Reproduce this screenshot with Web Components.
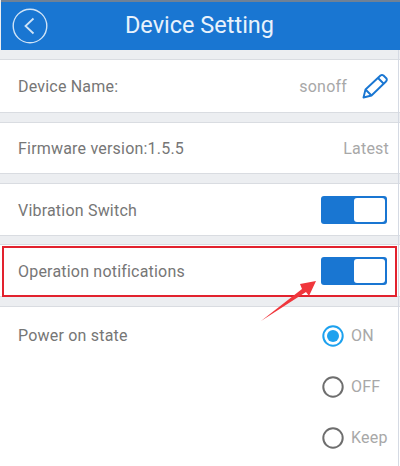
<!DOCTYPE html>
<html>
<head>
<meta charset="utf-8">
<style>
  html, body { margin: 0; padding: 0; background: #fff; }
  body { font-family: Roboto, "Liberation Sans", sans-serif; width: 400px; height: 466px; overflow: hidden; }
</style>
</head>
<body>
<setting-page>
  <app-header title="Device Setting"></app-header>
  <setting-row style="--h:54px;--gap:9px">
    Device Name:
    <span slot="end" class="val">sonoff</span>
    <edit-icon slot="end"></edit-icon>
  </setting-row>
  <setting-row style="--h:52px;--gap:9px">
    Firmware version:1.5.5
    <span slot="end" class="val" style="margin-right:-2px">Latest</span>
  </setting-row>
  <setting-row style="--h:53px;--gap:9px">
    Vibration Switch
    <toggle-switch slot="end"></toggle-switch>
  </setting-row>
  <setting-row style="--h:53px;--gap:8px">
    Operation notifications
    <toggle-switch slot="end"></toggle-switch>
  </setting-row>
  <power-row style="--gap:9px"></power-row>
  <call-out></call-out>
</setting-page>
<script>
  class SettingPage extends HTMLElement {
    constructor() {
      super();
      this.attachShadow({ mode: "open" });
      this.shadowRoot.innerHTML = `
        <style>
          :host { display: flex; flex-direction: column; position: relative; width: 400px; height: 466px; background: #eceef1; overflow: hidden; }
          .edge { position: absolute; top: 50px; right: 1px; bottom: 0; width: 1px; background: #d5dae3; }
        </style>
        <slot></slot>
        <div class="edge"></div>
      `;
    }
  }
  customElements.define("setting-page", SettingPage);

  class AppHeader extends HTMLElement {
    constructor() {
      super();
      this.attachShadow({ mode: "open" });
      this.shadowRoot.innerHTML = `
        <style>
          :host { display: flex; align-items: center; height: 48px; background: #1976d2; border-top: 2px solid #6f8196; margin-left: 1px; position: relative; }
          svg { margin-left: 11px; display: block; }
          .title { position: absolute; left: -2px; right: 0; text-align: center; color: #e8f2fc; font-size: 23.5px; line-height: 46px; top: 0; }
        </style>
        <svg width="36" height="36" viewBox="0 0 36 36" fill="none" stroke="#cfe3f6">
          <circle cx="18" cy="18" r="16.8" stroke-width="1.4"/>
          <path d="M21.5 10.5 L13.5 18 L21.5 25.5" stroke-width="1.8"/>
        </svg>
        <div class="title">${this.getAttribute("title")}</div>
      `;
    }
  }
  customElements.define("app-header", AppHeader);

  class SettingRow extends HTMLElement {
    constructor() {
      super();
      this.attachShadow({ mode: "open" });
      this.shadowRoot.innerHTML = `
        <style>
          :host { display: flex; align-items: center; justify-content: space-between; box-sizing: border-box;
            height: var(--h); margin-top: var(--gap); padding: 0 13px 0 18px; background: #fff;
            border-top: 1px solid #d9dce1; border-bottom: 1px solid #d9dce1;
            color: #767676; font-size: 16px; letter-spacing: .2px; }
          .label { padding-top: 1px; }
          .end { display: flex; align-items: center; }
          ::slotted(.val) { color: #a8a8a8; }
        </style>
        <div class="label"><slot></slot></div>
        <div class="end"><slot name="end"></slot></div>
      `;
    }
  }
  customElements.define("setting-row", SettingRow);

  class EditIcon extends HTMLElement {
    constructor() {
      super();
      this.attachShadow({ mode: "open" });
      this.shadowRoot.innerHTML = `
        <style>
          :host { display: block; margin-left: 15px; margin-right: -1px; height: 26px; }
          svg { display: block; }
        </style>
        <svg width="26" height="26" viewBox="0 0 26 26" fill="none" stroke="#1976d2" stroke-width="1.9" stroke-linejoin="round">
          <path d="M1.5 24.5 L3.5 16.5 L18.5 2.5 Q20 1.5 21.5 2.5 L24.5 5.5 Q25.3 7 24 8.5 L9.5 22.5 Z"/>
          <path d="M3.5 16.5 L9.5 22.5 M16 5 L22 11"/>
        </svg>
      `;
    }
  }
  customElements.define("edit-icon", EditIcon);

  class ToggleSwitch extends HTMLElement {
    constructor() {
      super();
      this.attachShadow({ mode: "open" });
      this.shadowRoot.innerHTML = `
        <style>
          :host { display: flex; justify-content: flex-end; box-sizing: border-box; width: 66px; height: 28px; padding: 2px; background: #1976d2; border-radius: 3px; }
          .knob { width: 31px; background: #fff; border-radius: 3px; }
        </style>
        <div class="knob"></div>
      `;
    }
  }
  customElements.define("toggle-switch", ToggleSwitch);

  class RadioOption extends HTMLElement {
    constructor() {
      super();
      this.attachShadow({ mode: "open" });
      const on = this.hasAttribute("checked");
      this.shadowRoot.innerHTML = `
        <style>
          :host { display: flex; align-items: center; gap: 7px; height: 51px; color: #a8a8a8; font-size: 16px; }
          svg { display: block; }
        </style>
        <svg width="22" height="22" viewBox="0 0 22 22" fill="none">
          <circle cx="11" cy="11" r="9.7" stroke="${on ? "#1da1ee" : "#6e6e6e"}" stroke-width="2"/>
          ${on ? '<circle cx="11" cy="11" r="6" fill="#1da1ee"/>' : ""}
        </svg>
        <slot></slot>
      `;
    }
  }
  customElements.define("radio-option", RadioOption);

  class PowerRow extends HTMLElement {
    constructor() {
      super();
      this.attachShadow({ mode: "open" });
      this.shadowRoot.innerHTML = `
        <style>
          :host { display: flex; justify-content: space-between; flex: 1; margin-top: var(--gap); padding: 0 0 0 18px; background: #fff; border-top: 1px solid #d9dce1; color: #767676; font-size: 16px; letter-spacing: .2px; }
          .label { margin-top: 19px; }
          .opts { display: flex; flex-direction: column; width: 78px; margin-top: 3px; }
        </style>
        <div class="label">Power on state</div>
        <div class="opts">
          <radio-option checked>ON</radio-option>
          <radio-option>OFF</radio-option>
          <radio-option>Keep</radio-option>
        </div>
      `;
    }
  }
  customElements.define("power-row", PowerRow);

  // red annotation drawn over the screenshot
  class CallOut extends HTMLElement {
    constructor() {
      super();
      this.attachShadow({ mode: "open" });
      this.shadowRoot.innerHTML = `
        <style>
          :host { display: block; position: absolute; inset: 0; pointer-events: none; }
          .box { position: absolute; left: 2px; top: 246px; width: 391px; height: 47px; border: 2px solid #e2222e; }
          svg { position: absolute; left: 0; top: 0; }
        </style>
        <div class="box"></div>
        <svg width="400" height="466" viewBox="0 0 400 466">
          <path d="M261 321 L302 289 L300 284 L316 281 L309 296 L306 292 Z" fill="#f0363c"/>
        </svg>
      `;
    }
  }
  customElements.define("call-out", CallOut);
</script>
</body>
</html>
